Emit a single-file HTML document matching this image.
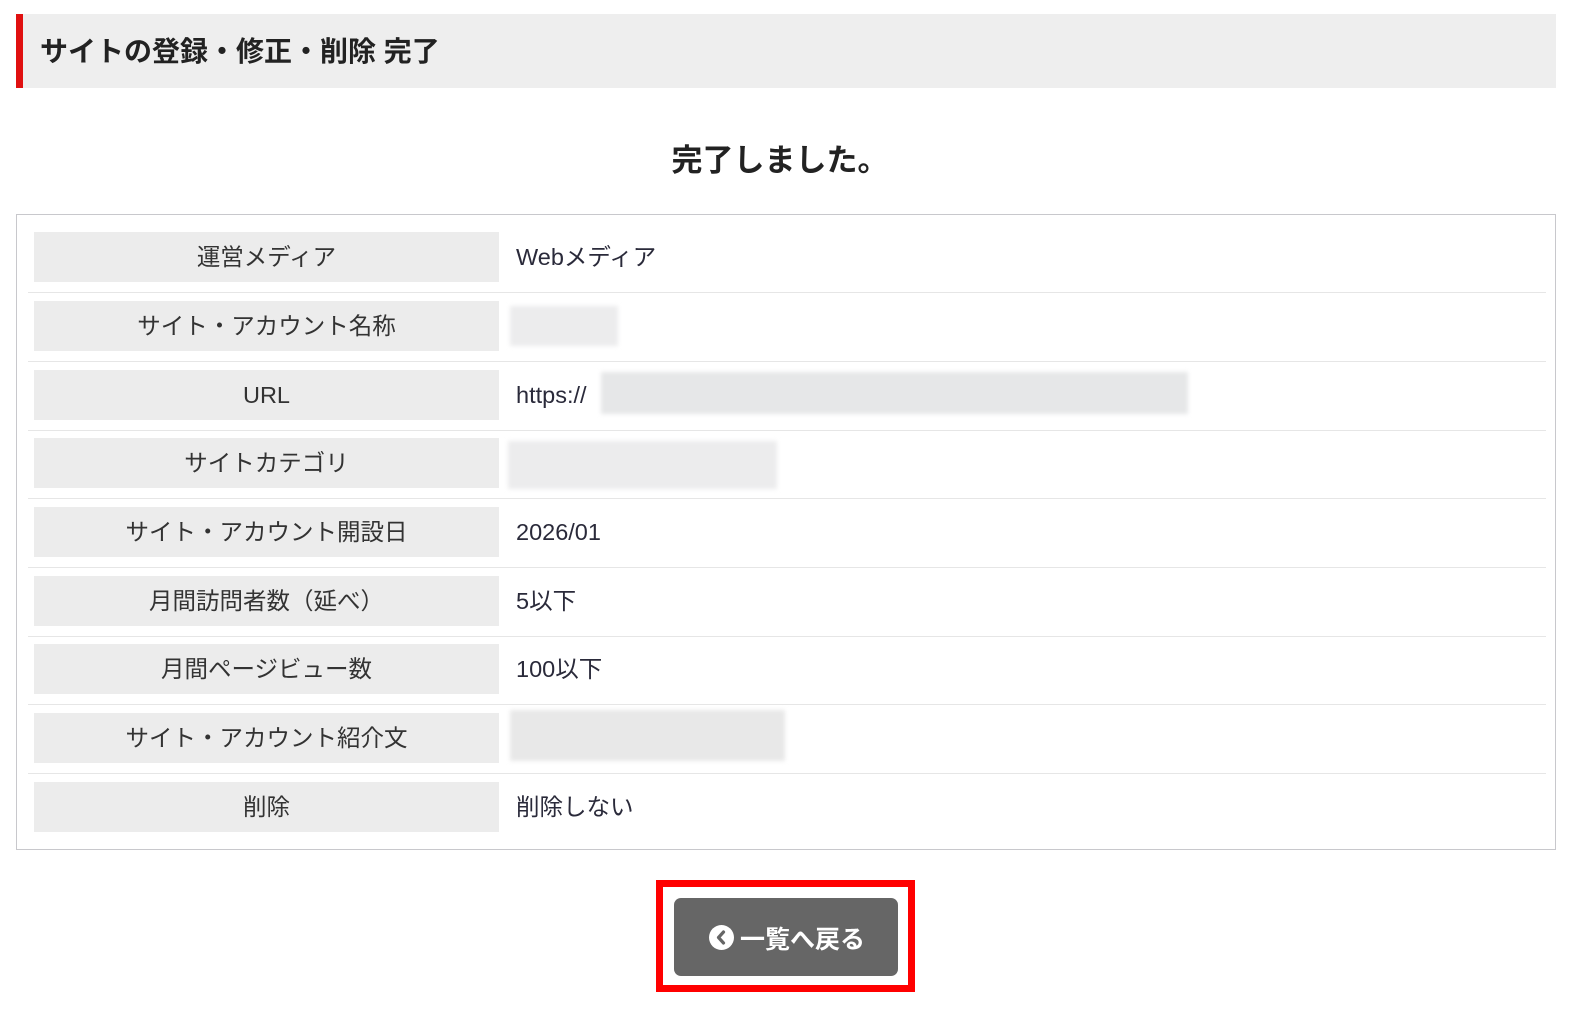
<!DOCTYPE html>
<html><head><meta charset="utf-8"><style>
body{margin:0;width:1596px;height:1020px;background:#fff;font-family:"Liberation Sans","Noto Sans CJK JP",sans-serif;position:relative;overflow:hidden}
.hd{position:absolute;left:16px;top:14px;width:1540px;height:74px;background:#eeeeee;border-left:7px solid #e01010;box-sizing:border-box}
.hd span{position:absolute;left:17px;top:16px;font-size:28px;font-weight:bold;color:#222}
.done{position:absolute;left:0;width:1560px;top:135px;text-align:center;font-size:31px;font-weight:bold;color:#222}
.box{position:absolute;left:16px;top:214px;width:1540px;height:636px;border:1px solid #c8c8cc;box-sizing:border-box}
.row{position:absolute;left:0;width:1540px;height:68px}
.lab{position:absolute;left:17px;top:17px;width:465px;height:50px;background:#ececec;text-align:center;line-height:50px;font-size:23.5px;color:#333}
.val{position:absolute;left:499px;top:17px;line-height:50px;font-size:23.5px;color:#2a2a3a}
.sep{position:absolute;left:11px;width:1518px;top:77px;height:1px;background:#e6e6e6}
.blur{position:absolute;background:#ececed;filter:blur(2px)}
.btnw{position:absolute;left:656px;top:880px;width:259px;height:112px;border:7px solid #f00;box-sizing:border-box}
.btn{position:absolute;left:674px;top:898px;width:224px;height:78px;background:#666;border-radius:7px;color:#fff;font-weight:bold;font-size:25px}
.ic{position:absolute;left:35px;top:27px;width:25px;height:25px;border-radius:50%;background:#fff}
.btn span{position:absolute;left:66px;top:22px}
</style></head><body>
<div class="hd"><span>サイトの登録・修正・削除 完了</span></div>
<div class="done">完了しました。</div>
<div class="box">
<div class="row" style="top:0"><div class="lab">運営メディア</div><div class="val">Webメディア</div><div class="sep"></div></div>
<div class="row" style="top:69px"><div class="lab">サイト・アカウント名称</div><div class="blur" style="left:493px;top:22px;width:108px;height:40px"></div><div class="sep"></div></div>
<div class="row" style="top:138px"><div class="lab">URL</div><div class="val">https://</div><div class="blur" style="left:584px;top:19px;width:587px;height:42px;background:#e6e7e8"></div><div class="sep"></div></div>
<div class="row" style="top:206px"><div class="lab">サイトカテゴリ</div><div class="blur" style="left:491px;top:20px;width:269px;height:48px"></div><div class="sep"></div></div>
<div class="row" style="top:275px"><div class="lab">サイト・アカウント開設日</div><div class="val">2026/01</div><div class="sep"></div></div>
<div class="row" style="top:344px"><div class="lab">月間訪問者数（延べ）</div><div class="val">5以下</div><div class="sep"></div></div>
<div class="row" style="top:412px"><div class="lab">月間ページビュー数</div><div class="val">100以下</div><div class="sep"></div></div>
<div class="row" style="top:481px"><div class="lab">サイト・アカウント紹介文</div><div class="blur" style="left:493px;top:14px;width:275px;height:51px;background:#e8e8e8"></div><div class="sep"></div></div>
<div class="row" style="top:550px"><div class="lab">削除</div><div class="val">削除しない</div></div>
</div>
<div class="btnw"></div>
<div class="btn"><div class="ic"><svg width="25" height="25" viewBox="0 0 25 25"><path d="M14.5 7 L9.5 12.5 L14.5 18" stroke="#666" stroke-width="3.2" fill="none" stroke-linecap="round" stroke-linejoin="round"/></svg></div><span>一覧へ戻る</span></div>
</body></html>
